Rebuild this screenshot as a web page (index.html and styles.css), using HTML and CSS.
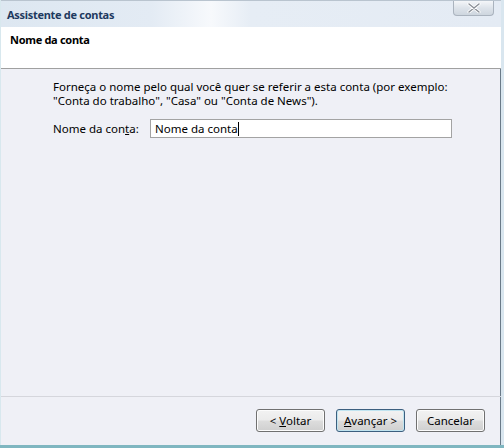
FILE: index.html
```html
<!DOCTYPE html>
<html lang="pt-BR">
<head>
    <meta charset="UTF-8">
    <meta name="viewport" content="width=device-width, initial-scale=1.0">
    <title>Assistente de contas</title>
    <link rel="stylesheet" href="styles.css">
</head>
<body>
    <div class="window">
        <div class="titlebar">
            <span class="title">Assistente de contas</span>
            <div class="close-btn">
                <svg width="14" height="10" viewBox="0 0 14 10">
                    <path d="M2 1 L12 9 M12 1 L2 9" stroke="#ffffff" stroke-width="3" stroke-linecap="round"/>
                    <path d="M2 1 L12 9 M12 1 L2 9" stroke="#8a8f97" stroke-width="1.4" stroke-linecap="round"/>
                </svg>
            </div>
        </div>

        <div class="header">
            <h1 class="header-title">Nome da conta</h1>
        </div>

        <div class="content">
            <p class="intro">Forneça o nome pelo qual você quer se referir a esta conta (por exemplo:<br>"Conta do trabalho", "Casa" ou "Conta de News").</p>
            <div class="field-row">
                <label class="field-label">Nome da con<u>t</u>a:</label>
                <div class="text-box">Nome da conta<span class="caret"></span></div>
            </div>
        </div>

        <div class="footer">
            <button class="btn">&lt; <u>V</u>oltar</button>
            <button class="btn btn-default"><u>A</u>vançar &gt;</button>
            <button class="btn">Cancelar</button>
        </div>
    </div>
</body>
</html>
```

FILE: styles.css
```css
body {
    margin: 0;
    width: 504px;
    height: 448px;
    overflow: hidden;
    font-family: "Noto Sans", "Open Sans", sans-serif;
    font-size: 11.5px;
    background-color: #7fb6c0;
}

.window {
    box-sizing: border-box;
    width: 504px;
    height: 445px;
    display: flex;
    flex-direction: column;
    background-color: #eff0f6;
    border-left: 1px solid #d8e8ee;
    border-right: 3px solid #d9e6ef;
    box-shadow: inset -1px 0 0 #6a7a88;
}

.titlebar {
    height: 27px;
    flex: none;
    display: flex;
    align-items: flex-start;
    justify-content: space-between;
    border-top: 1px solid #b9c4cf;
    box-sizing: border-box;
    background: linear-gradient(90deg, #dde7f1 0%, #e3ebf4 30%, #f7f9fc 42%, #e6edf5 50%, #e4ebf4 100%);
}

.title {
    margin: 6px 0 0 6px;
    font-size: 11px;
    font-weight: bold;
    letter-spacing: -0.3px;
    color: #1e3a5f;
}

.close-btn {
    width: 41px;
    height: 15px;
    margin-right: 7px;
    display: flex;
    align-items: center;
    justify-content: center;
    border: 1px solid #aab3be;
    border-top: none;
    border-radius: 0 0 4px 4px;
    background: linear-gradient(#f4f6f9, #dde3ea 50%, #ced6df);
    box-sizing: border-box;
}

.header {
    height: 42px;
    flex: none;
    background-color: #ffffff;
    border-bottom: 1px solid #a0a0a0;
    box-sizing: border-box;
}

.header-title {
    margin: 5px 0 0 9px;
    font-size: 11px;
    font-weight: bold;
    letter-spacing: -0.3px;
    color: #000000;
}

.content {
    flex: 1;
    padding: 11px 0 0 52px;
    border-bottom: 1px solid #d5d6dc;
}

.intro {
    margin: 0;
    line-height: 14px;
    color: #000000;
}

.field-row {
    display: flex;
    align-items: center;
    margin-top: 11px;
}

.field-label {
    width: 97px;
}

.text-box {
    box-sizing: border-box;
    width: 302px;
    height: 19px;
    padding: 0 0 0 4px;
    background-color: #ffffff;
    border: 1px solid #a3a3a3;
    display: flex;
    align-items: center;
}

.caret {
    display: inline-block;
    width: 1px;
    height: 14px;
    background-color: #000000;
}

.footer {
    height: 48px;
    flex: none;
    display: flex;
    justify-content: flex-end;
    align-items: flex-start;
    gap: 11px;
    padding: 12px 16px 0 0;
    box-sizing: border-box;
}

.btn {
    width: 69px;
    height: 23px;
    padding: 0;
    font-family: inherit;
    font-size: 11.5px;
    color: #000000;
    border: 1px solid #707070;
    border-radius: 3px;
    background: linear-gradient(#f2f2f2 0%, #ebebeb 48%, #dddddd 52%, #cfcfcf 100%);
    box-shadow: inset 0 0 0 1px #fcfcfc;
}

.btn-default {
    border-color: #3c5f7f;
    box-shadow: inset 0 0 0 1px #c0e4f0;
}
```
